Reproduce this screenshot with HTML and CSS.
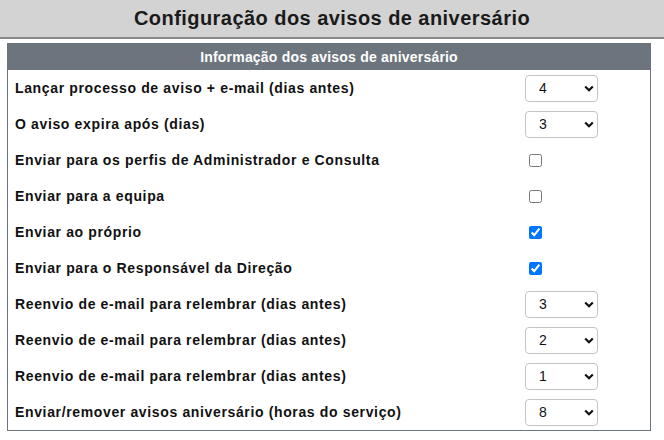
FILE: index.html
```html
<!DOCTYPE html>
<html lang="pt">
<head>
<meta charset="utf-8">
<link rel="stylesheet" href="styles.css">
</head>
<body>
<header class="page-header">
  <h1 class="page-title">Configuração dos avisos de aniversário</h1>
</header>
<table class="settings">
  <thead>
    <tr><th colspan="2">Informação dos avisos de aniversário</th></tr>
  </thead>
  <tbody>
    <tr><td class="label">Lançar processo de aviso + e-mail (dias antes)</td><td class="ctrl"><select class="sel"><option>4</option></select></td></tr>
    <tr><td class="label">O aviso expira após (dias)</td><td class="ctrl"><select class="sel"><option>3</option></select></td></tr>
    <tr><td class="label">Enviar para os perfis de Administrador e Consulta</td><td class="ctrl"><input type="checkbox" class="chk"></td></tr>
    <tr><td class="label">Enviar para a equipa</td><td class="ctrl"><input type="checkbox" class="chk"></td></tr>
    <tr><td class="label">Enviar ao próprio</td><td class="ctrl"><input type="checkbox" class="chk" checked></td></tr>
    <tr><td class="label">Enviar para o Responsável da Direção</td><td class="ctrl"><input type="checkbox" class="chk" checked></td></tr>
    <tr><td class="label">Reenvio de e-mail para relembrar (dias antes)</td><td class="ctrl"><select class="sel"><option>3</option></select></td></tr>
    <tr><td class="label">Reenvio de e-mail para relembrar (dias antes)</td><td class="ctrl"><select class="sel"><option>2</option></select></td></tr>
    <tr><td class="label">Reenvio de e-mail para relembrar (dias antes)</td><td class="ctrl"><select class="sel"><option>1</option></select></td></tr>
    <tr><td class="label">Enviar/remover avisos aniversário (horas do serviço)</td><td class="ctrl"><select class="sel"><option>8</option></select></td></tr>
  </tbody>
</table>
</body>
</html>
```
FILE: styles.css
```css
html, body {
  margin: 0;
  padding: 0;
  background: #fff;
  font-family: "Liberation Sans", Arial, sans-serif;
  color: #111;
}
.page-header {
  background: #d3d3d3;
  border-bottom: 2px solid #8a8a8a;
  height: 37px;
  display: flex;
  align-items: center;
  justify-content: center;
}
.page-title {
  margin: 0;
  font-size: 20px;
  font-weight: bold;
  letter-spacing: 0.45px;
  color: #1a1a1a;
}
.settings {
  margin: 4px 0 0 7px;
  width: 644px;
  border-collapse: collapse;
  border: 1px solid #6c757d;
}
.settings th {
  background: #6c757d;
  color: #fff;
  font-size: 14px;
  font-weight: bold;
  letter-spacing: 0.2px;
  height: 26px;
  padding: 0;
  text-align: center;
}
.settings td {
  height: 36px;
  padding: 0;
}
.label {
  padding-left: 7px !important;
  font-size: 14px;
  font-weight: bold;
  letter-spacing: 0.64px;
  color: #111;
}
.ctrl {
  width: 125px;
}
.sel {
  appearance: none;
  -webkit-appearance: none;
  width: 73px;
  height: 27px;
  border: 1px solid #c4c4c4;
  border-radius: 4px;
  background: #fff url("data:image/svg+xml,%3Csvg xmlns='http://www.w3.org/2000/svg' width='10' height='7' viewBox='0 0 10 7'%3E%3Cpath d='M1.2 1.5 L5 5.2 L8.8 1.5' fill='none' stroke='%23111' stroke-width='2.2'/%3E%3C/svg%3E") no-repeat right 3px center;
  font-family: "Liberation Sans", Arial, sans-serif;
  font-size: 14px;
  color: #111;
  padding: 0 0 0 13px;
  margin: 0;
  display: block;
}
.chk {
  margin: 0 0 0 4px;
  width: 13px;
  height: 13px;
  display: block;
}
```
